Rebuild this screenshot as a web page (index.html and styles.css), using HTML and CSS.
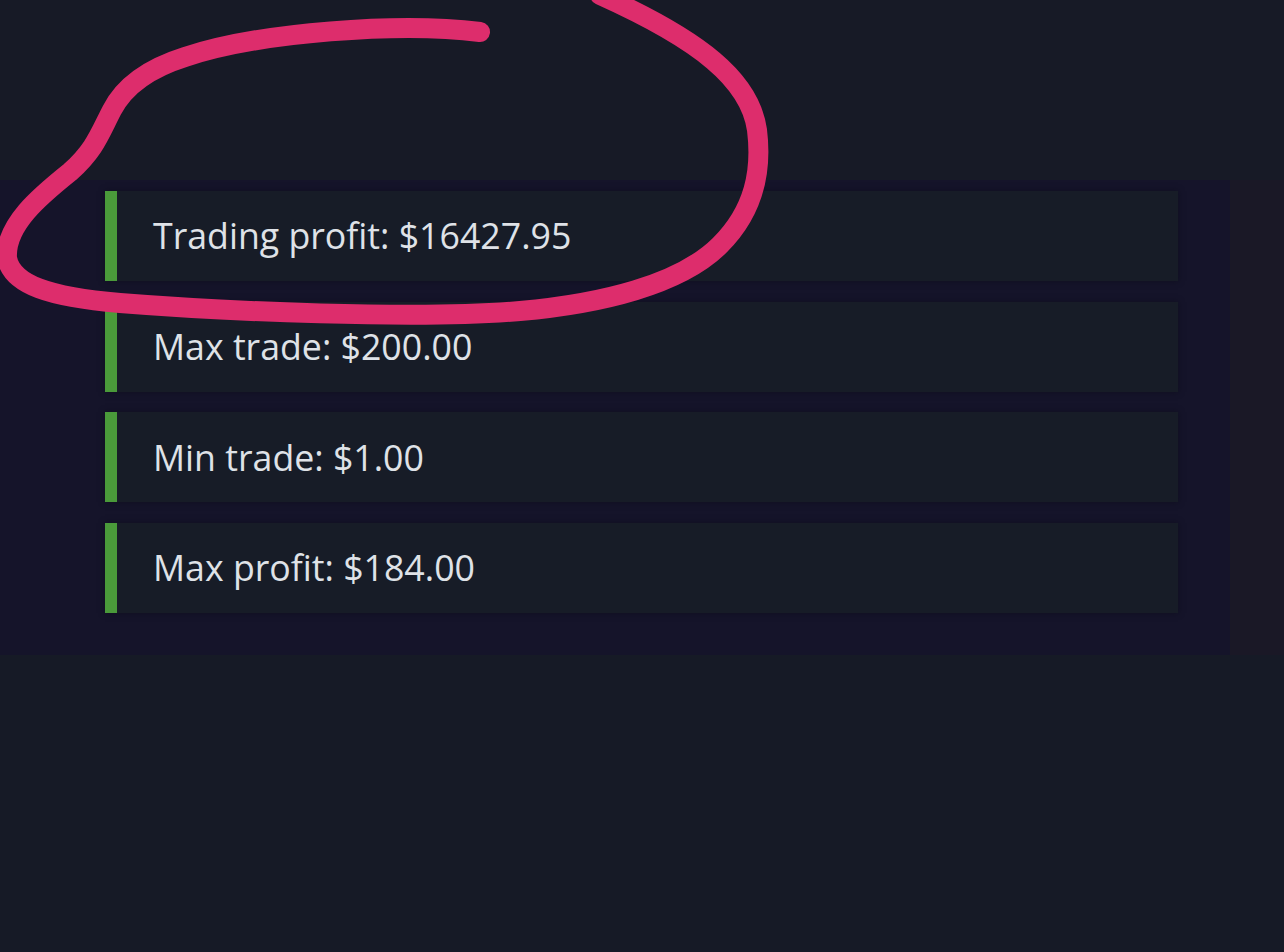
FILE: index.html
```html
<!DOCTYPE html>
<html>
<head>
<meta charset="utf-8">
<link rel="stylesheet" href="styles.css">
</head>
<body>
<div class="page">
  <div class="top"></div>
  <div class="panel">
    <div class="main">
      <div class="row"><span class="label">Trading profit: $16427.95</span></div>
      <div class="row"><span class="label">Max trade: $200.00</span></div>
      <div class="row"><span class="label">Min trade: $1.00</span></div>
      <div class="row"><span class="label">Max profit: $184.00</span></div>
    </div>
    <div class="side"></div>
  </div>
  <div class="bottom"></div>
  <svg class="scribble" width="1284" height="952" viewBox="0 0 1284 952">
    <path d="M480,32 C400,22 260,32 185,57 C150,68 125,85 112,110 C100,133 95,150 70,172 C40,196 5,225 7,258 C12,285 50,297 120,303 C220,311 420,320 520,311 C600,304 680,285 720,245 C755,210 762,170 757,130 C750,80 700,40 600,-5" fill="none" stroke="#dd2d6c" stroke-width="20" stroke-linecap="round" stroke-linejoin="round"/>
  </svg>
</div>
</body>
</html>
```
FILE: styles.css
```css
html, body {
  margin: 0;
  padding: 0;
  background: #171a26;
}
.page {
  position: relative;
  width: 1284px;
  height: 952px;
  overflow: hidden;
  font-family: "Open Sans", "Noto Sans", sans-serif;
}
.top {
  height: 180px;
  background: #171a26;
}
.panel {
  display: flex;
  height: 475px;
}
.main {
  width: 1230px;
  background: #15142a;
  padding: 11px 0 0 105px;
  box-sizing: border-box;
  display: flex;
  flex-direction: column;
  gap: 20.7px;
}
.side {
  flex: 1;
  background: #1a1826;
}
.row {
  width: 1073px;
  height: 90px;
  background: #171c27;
  border-left: 12px solid #4a9a3a;
  box-sizing: border-box;
  display: flex;
  align-items: center;
  padding-left: 36px;
  box-shadow: 0 0 6px rgba(10, 10, 20, 0.5);
}
.label {
  color: #dfe2e7;
  font-size: 35.7px;
  line-height: 1;
  padding-top: 0;
}
.bottom {
  height: 297px;
  background: #161a26;
}
.scribble {
  position: absolute;
  left: 0;
  top: 0;
  pointer-events: none;
}
```
